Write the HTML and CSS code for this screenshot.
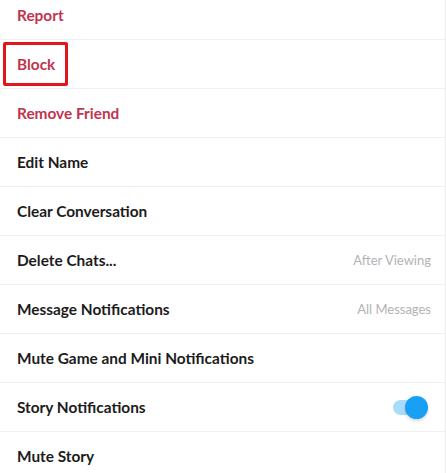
FILE: index.html
```html
<!DOCTYPE html>
<html lang="en">
<head>
    <meta charset="UTF-8">
    <title>Friend Settings</title>
    <meta name="viewport" content="width=device-width, initial-scale=1.0">
    <link rel="stylesheet" href="styles.css">
</head>
<body>
    <ul class="menu">
        <li class="row danger">Report</li>
        <li class="row danger"><span class="highlight">Block</span></li>
        <li class="row danger">Remove Friend</li>
        <li class="row">Edit Name</li>
        <li class="row">Clear Conversation</li>
        <li class="row">Delete Chats... <span class="value">After Viewing</span></li>
        <li class="row">Message Notifications <span class="value">All Messages</span></li>
        <li class="row">Mute Game and Mini Notifications</li>
        <li class="row">Story Notifications
            <span class="toggle"><span class="knob"></span></span>
        </li>
        <li class="row">Mute Story</li>
    </ul>
</body>
</html>
```

FILE: styles.css
```css
/* Lista de ajustes */
body {
    margin: 0;
    background: #ffffff;
    font-family: 'Lato', 'Open Sans', sans-serif;
    overflow: hidden;
}

.menu {
    list-style: none;
    margin: -9px 0 0 0;
    padding: 0;
    border-right: 1px solid #ececec;
}

.row {
    height: 48px;
    border-bottom: 1px solid #f0f0f0;
    display: flex;
    align-items: center;
    justify-content: space-between;
    padding: 0 14px 0 17px;
    font-size: 15.4px;
    font-weight: 700;
    color: #1c1c1c;
}

.danger {
    color: #c1344e;
}

.highlight {
    position: relative;
}

.highlight::before {
    content: "";
    position: absolute;
    left: -14px;
    top: -13px;
    width: 59px;
    height: 38px;
    border: 3px solid #e3141d;
    border-radius: 2px;
}

.value {
    font-size: 13px;
    font-weight: 400;
    color: #b3b3b3;
}

.toggle {
    position: relative;
    width: 26px;
    height: 15px;
    margin-right: 12px;
    border-radius: 8px;
    background: #a9dcfb;
}

.knob {
    position: absolute;
    right: -9px;
    top: -4px;
    width: 23px;
    height: 23px;
    border-radius: 50%;
    background: #17a0f4;
    box-shadow: 0 2px 3px rgba(0, 0, 0, 0.15);
}
```
